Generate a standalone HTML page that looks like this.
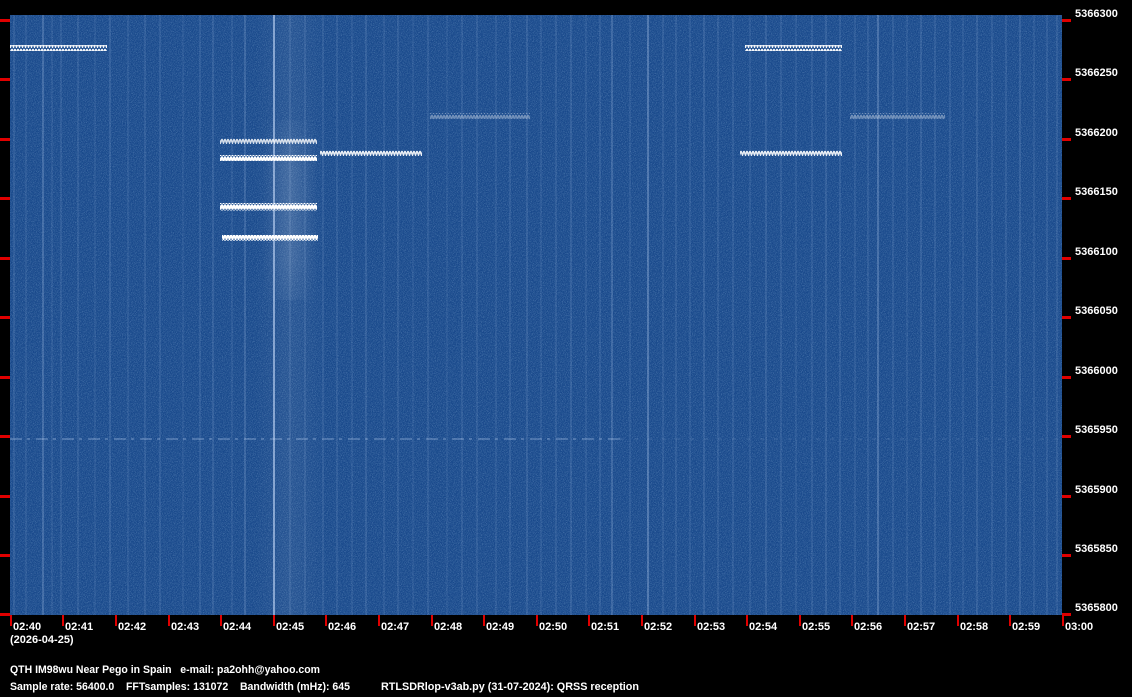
<!DOCTYPE html>
<html><head><meta charset="utf-8">
<style>
html,body{margin:0;padding:0;background:#000;width:1132px;height:697px;overflow:hidden}
svg text{font-family:"Liberation Sans",sans-serif;font-weight:bold;fill:#fff}
</style></head><body>
<svg width="1132" height="697" viewBox="0 0 1132 697" xmlns="http://www.w3.org/2000/svg">
<defs>
<filter id="n" x="0" y="0" width="100%" height="100%">
<feTurbulence type="fractalNoise" baseFrequency="1.2" numOctaves="1" seed="3"/>
<feColorMatrix type="matrix" values="0 0 0 0 0.6  0 0 0 0 0.78  0 0 0 0 1  2.5 0 0 0 -1.15"/>
</filter>
<filter id="nd" x="0" y="0" width="100%" height="100%">
<feTurbulence type="fractalNoise" baseFrequency="1.1" numOctaves="1" seed="9"/>
<feColorMatrix type="matrix" values="0 0 0 0 0.02  0 0 0 0 0.1  0 0 0 0 0.3  2.5 0 0 0 -0.9"/>
</filter>
<linearGradient id="glow" x1="0" x2="1">
<stop offset="0" stop-color="#fff" stop-opacity="0"/>
<stop offset="0.5" stop-color="#fff" stop-opacity="0.12"/>
<stop offset="1" stop-color="#fff" stop-opacity="0"/>
</linearGradient>
<linearGradient id="glowv" x1="0" y1="0" x2="0" y2="1">
<stop offset="0" stop-color="#fff" stop-opacity="0"/>
<stop offset="0.3" stop-color="#fff" stop-opacity="1"/>
<stop offset="0.7" stop-color="#fff" stop-opacity="1"/>
<stop offset="1" stop-color="#fff" stop-opacity="0"/>
</linearGradient>
<mask id="gm"><rect x="250" y="100" width="90" height="230" fill="url(#glowv)"/></mask>
<pattern id="zz" width="3" height="6" patternUnits="userSpaceOnUse">
<path d="M0,1 L1.5,5 L3,1" fill="none" stroke="#fff" stroke-width="1.5"/>
</pattern>
<pattern id="zz2" width="3" height="6" patternUnits="userSpaceOnUse">
<path d="M0,0.5 L1.5,5.5 L3,0.5" fill="none" stroke="#fff" stroke-width="1.8"/>
</pattern>
</defs>
<rect x="10" y="15" width="1052" height="600" fill="#17468a"/>
<rect x="10" y="15" width="1052" height="600" filter="url(#nd)" opacity="0.9"/>
<rect x="10" y="15" width="1052" height="600" filter="url(#n)" opacity="0.3"/>
<rect x="255" y="15" width="70" height="600" fill="url(#glow)" opacity="0.5"/>
<rect x="262" y="120" width="56" height="180" fill="url(#glow)" mask="url(#gm)"/>
<g stroke="#cfe2ff" stroke-width="1">
<line x1="14" y1="15" x2="14" y2="615" opacity="0.18"/>
<line x1="26" y1="15" x2="26" y2="615" opacity="0.15"/>
<line x1="43" y1="15" x2="43" y2="615" opacity="0.4"/>
<line x1="52" y1="15" x2="52" y2="615" opacity="0.15"/>
<line x1="61" y1="15" x2="61" y2="615" opacity="0.18"/>
<line x1="78" y1="15" x2="78" y2="615" opacity="0.18"/>
<line x1="95" y1="15" x2="95" y2="615" opacity="0.12"/>
<line x1="110" y1="15" x2="110" y2="615" opacity="0.22"/>
<line x1="128" y1="15" x2="128" y2="615" opacity="0.15"/>
<line x1="145" y1="15" x2="145" y2="615" opacity="0.18"/>
<line x1="160" y1="15" x2="160" y2="615" opacity="0.18"/>
<line x1="183" y1="15" x2="183" y2="615" opacity="0.12"/>
<line x1="200" y1="15" x2="200" y2="615" opacity="0.18"/>
<line x1="213" y1="15" x2="213" y2="615" opacity="0.22"/>
<line x1="232" y1="15" x2="232" y2="615" opacity="0.15"/>
<line x1="245" y1="15" x2="245" y2="615" opacity="0.3"/>
<line x1="274" y1="15" x2="274" y2="615" opacity="0.75" stroke-width="1.5"/>
<line x1="290" y1="15" x2="290" y2="615" opacity="0.18"/>
<line x1="305" y1="15" x2="305" y2="615" opacity="0.18"/>
<line x1="323" y1="15" x2="323" y2="615" opacity="0.18"/>
<line x1="337" y1="15" x2="337" y2="615" opacity="0.18"/>
<line x1="352" y1="15" x2="352" y2="615" opacity="0.15"/>
<line x1="366" y1="15" x2="366" y2="615" opacity="0.22"/>
<line x1="384" y1="15" x2="384" y2="615" opacity="0.15"/>
<line x1="398" y1="15" x2="398" y2="615" opacity="0.18"/>
<line x1="413" y1="15" x2="413" y2="615" opacity="0.12"/>
<line x1="428" y1="15" x2="428" y2="615" opacity="0.18"/>
<line x1="447" y1="15" x2="447" y2="615" opacity="0.12"/>
<line x1="462" y1="15" x2="462" y2="615" opacity="0.18"/>
<line x1="477" y1="15" x2="477" y2="615" opacity="0.18"/>
<line x1="496" y1="15" x2="496" y2="615" opacity="0.15"/>
<line x1="510" y1="15" x2="510" y2="615" opacity="0.18"/>
<line x1="527" y1="15" x2="527" y2="615" opacity="0.22"/>
<line x1="541" y1="15" x2="541" y2="615" opacity="0.15"/>
<line x1="556" y1="15" x2="556" y2="615" opacity="0.18"/>
<line x1="571" y1="15" x2="571" y2="615" opacity="0.22"/>
<line x1="586" y1="15" x2="586" y2="615" opacity="0.15"/>
<line x1="600" y1="15" x2="600" y2="615" opacity="0.18"/>
<line x1="612" y1="15" x2="612" y2="615" opacity="0.35"/>
<line x1="630" y1="15" x2="630" y2="615" opacity="0.15"/>
<line x1="648" y1="15" x2="648" y2="615" opacity="0.55"/>
<line x1="663" y1="15" x2="663" y2="615" opacity="0.18"/>
<line x1="676" y1="15" x2="676" y2="615" opacity="0.18"/>
<line x1="690" y1="15" x2="690" y2="615" opacity="0.15"/>
<line x1="704" y1="15" x2="704" y2="615" opacity="0.22"/>
<line x1="718" y1="15" x2="718" y2="615" opacity="0.18"/>
<line x1="733" y1="15" x2="733" y2="615" opacity="0.18"/>
<line x1="750" y1="15" x2="750" y2="615" opacity="0.15"/>
<line x1="766" y1="15" x2="766" y2="615" opacity="0.22"/>
<line x1="781" y1="15" x2="781" y2="615" opacity="0.18"/>
<line x1="796" y1="15" x2="796" y2="615" opacity="0.15"/>
<line x1="812" y1="15" x2="812" y2="615" opacity="0.18"/>
<line x1="826" y1="15" x2="826" y2="615" opacity="0.22"/>
<line x1="840" y1="15" x2="840" y2="615" opacity="0.18"/>
<line x1="855" y1="15" x2="855" y2="615" opacity="0.15"/>
<line x1="868" y1="15" x2="868" y2="615" opacity="0.18"/>
<line x1="878" y1="15" x2="878" y2="615" opacity="0.45"/>
<line x1="893" y1="15" x2="893" y2="615" opacity="0.18"/>
<line x1="907" y1="15" x2="907" y2="615" opacity="0.15"/>
<line x1="921" y1="15" x2="921" y2="615" opacity="0.22"/>
<line x1="935" y1="15" x2="935" y2="615" opacity="0.18"/>
<line x1="950" y1="15" x2="950" y2="615" opacity="0.18"/>
<line x1="963" y1="15" x2="963" y2="615" opacity="0.15"/>
<line x1="977" y1="15" x2="977" y2="615" opacity="0.22"/>
<line x1="992" y1="15" x2="992" y2="615" opacity="0.18"/>
<line x1="1006" y1="15" x2="1006" y2="615" opacity="0.18"/>
<line x1="1020" y1="15" x2="1020" y2="615" opacity="0.22"/>
<line x1="1034" y1="15" x2="1034" y2="615" opacity="0.15"/>
<line x1="1047" y1="15" x2="1047" y2="615" opacity="0.18"/>
<line x1="1057" y1="15" x2="1057" y2="615" opacity="0.18"/>
</g>
<line x1="10" y1="439" x2="620" y2="439" stroke="#cfe2ff" stroke-width="1.2" stroke-dasharray="12 5 3 6" opacity="0.4"/>
<line x1="620" y1="439" x2="1062" y2="439" stroke="#cfe2ff" stroke-width="1" stroke-dasharray="4 10" opacity="0.15"/>
<rect x="10" y="45" width="97" height="6" fill="url(#zz)" opacity="0.95"/>
<rect x="745" y="45" width="97" height="6" fill="url(#zz)" opacity="0.95"/>
<rect x="430" y="113" width="100" height="6" fill="url(#zz)" opacity="0.35"/>
<rect x="850" y="113" width="95" height="6" fill="url(#zz)" opacity="0.35"/>
<rect x="220" y="138" width="97" height="6" fill="url(#zz)" opacity="0.8"/>
<rect x="320" y="150" width="102" height="6" fill="url(#zz)" opacity="0.9"/>
<rect x="740" y="150" width="102" height="6" fill="url(#zz)" opacity="0.9"/>
<rect x="220" y="155" width="97" height="6" fill="url(#zz2)"/>
<rect x="220" y="203" width="97" height="6" fill="url(#zz2)"/>
<rect x="220" y="205" width="97" height="6" fill="url(#zz2)" opacity="0.7"/>
<rect x="222" y="235" width="96" height="6" fill="url(#zz2)"/>
<g fill="#e00000">
<rect x="0" y="19" width="10" height="3"/><rect x="0" y="78" width="10" height="3"/><rect x="0" y="138" width="10" height="3"/><rect x="0" y="197" width="10" height="3"/><rect x="0" y="257" width="10" height="3"/><rect x="0" y="316" width="10" height="3"/><rect x="0" y="376" width="10" height="3"/><rect x="0" y="435" width="10" height="3"/><rect x="0" y="495" width="10" height="3"/><rect x="0" y="554" width="10" height="3"/><rect x="0" y="613" width="10" height="3"/>
<rect x="1062" y="19" width="9" height="3"/><rect x="1062" y="78" width="9" height="3"/><rect x="1062" y="138" width="9" height="3"/><rect x="1062" y="197" width="9" height="3"/><rect x="1062" y="257" width="9" height="3"/><rect x="1062" y="316" width="9" height="3"/><rect x="1062" y="376" width="9" height="3"/><rect x="1062" y="435" width="9" height="3"/><rect x="1062" y="495" width="9" height="3"/><rect x="1062" y="554" width="9" height="3"/><rect x="1062" y="613" width="9" height="3"/>
<rect x="10" y="615" width="2" height="11"/><rect x="62" y="615" width="2" height="11"/><rect x="115" y="615" width="2" height="11"/><rect x="168" y="615" width="2" height="11"/><rect x="220" y="615" width="2" height="11"/><rect x="273" y="615" width="2" height="11"/><rect x="325" y="615" width="2" height="11"/><rect x="378" y="615" width="2" height="11"/><rect x="431" y="615" width="2" height="11"/><rect x="483" y="615" width="2" height="11"/><rect x="536" y="615" width="2" height="11"/><rect x="588" y="615" width="2" height="11"/><rect x="641" y="615" width="2" height="11"/><rect x="694" y="615" width="2" height="11"/><rect x="746" y="615" width="2" height="11"/><rect x="799" y="615" width="2" height="11"/><rect x="851" y="615" width="2" height="11"/><rect x="904" y="615" width="2" height="11"/><rect x="957" y="615" width="2" height="11"/><rect x="1009" y="615" width="2" height="11"/><rect x="1062" y="615" width="2" height="11"/>
</g>
<g font-size="11">
<text x="1075" y="17">5366300</text><text x="1075" y="76">5366250</text><text x="1075" y="136">5366200</text><text x="1075" y="195">5366150</text><text x="1075" y="255">5366100</text><text x="1075" y="314">5366050</text><text x="1075" y="374">5366000</text><text x="1075" y="433">5365950</text><text x="1075" y="493">5365900</text><text x="1075" y="552">5365850</text><text x="1075" y="611">5365800</text>
<text x="13" y="630">02:40</text><text x="65" y="630">02:41</text><text x="118" y="630">02:42</text><text x="171" y="630">02:43</text><text x="223" y="630">02:44</text><text x="276" y="630">02:45</text><text x="328" y="630">02:46</text><text x="381" y="630">02:47</text><text x="434" y="630">02:48</text><text x="486" y="630">02:49</text><text x="539" y="630">02:50</text><text x="591" y="630">02:51</text><text x="644" y="630">02:52</text><text x="697" y="630">02:53</text><text x="749" y="630">02:54</text><text x="802" y="630">02:55</text><text x="854" y="630">02:56</text><text x="907" y="630">02:57</text><text x="960" y="630">02:58</text><text x="1012" y="630">02:59</text><text x="1065" y="630">03:00</text>
<text x="10" y="643">(2026-04-25)</text>
<text x="10" y="673" xml:space="preserve" textLength="310" lengthAdjust="spacingAndGlyphs">QTH IM98wu Near Pego in Spain   e-mail: pa2ohh@yahoo.com</text>
<text x="10" y="690" xml:space="preserve" textLength="340" lengthAdjust="spacingAndGlyphs">Sample rate: 56400.0    FFTsamples: 131072    Bandwidth (mHz): 645</text>
<text x="381" y="690" textLength="258" lengthAdjust="spacingAndGlyphs">RTLSDRlop-v3ab.py (31-07-2024): QRSS reception</text>
</g>
</svg>
</body></html>
